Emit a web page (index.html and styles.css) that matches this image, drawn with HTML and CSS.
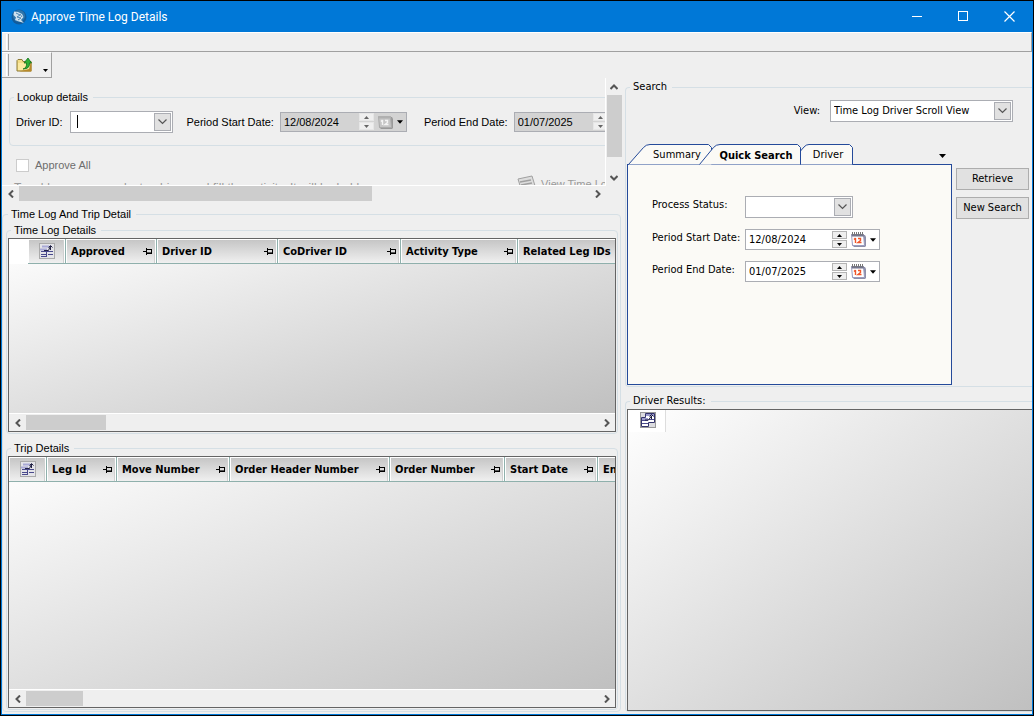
FILE: index.html
```html
<!DOCTYPE html>
<html lang="en">
<head>
	<meta charset="utf-8">
	<title>Approve Time Log Details</title>
	<link rel="stylesheet" href="styles.css">
</head>
<body>
	<!-- shared icons -->
	<svg class="defs" width="0" height="0" aria-hidden="true">
		<symbol id="pin" viewBox="0 0 10 9">
			<path d="M0 4.5H3M3.5 1V8M3 2.5H9M3 6.5H9M8.5 2V7" fill="none" stroke="#000"/>
			<path d="M4 5.5H9" stroke="#000" stroke-opacity=".6"/>
		</symbol>
		<symbol id="chooser" viewBox="0 0 16 16">
			<rect x=".5" y=".5" width="15" height="15" fill="#e4e4e8" stroke="#aaa"/>
			<path d="M3 3.5H10M1 6.5H8" stroke="#a9a9d6" stroke-width="2"/>
			<path d="M2 8.5H14M2 11.5H7M9 11.5H14M2 13.5H7M7.5 8V14" stroke="#4a4a8c"/>
			<path d="M5 7.5H9.5L11.5 3V7M9.5 4.5L11.5 2.5L13.5 4.5" fill="none" stroke="#222244"/>
		</symbol>
		<symbol id="chooser-big" viewBox="0 0 16 16">
			<rect x=".5" y=".5" width="15" height="15" fill="#dcdce0" stroke="#999"/>
			<path d="M5.5 1.5H14.5V10.5H8.5V14.5H1.5V5.5H5.5Z" fill="#fff" stroke="#34346c"/>
			<path d="M6 3H14M2 7H8" stroke="#9a9acc" stroke-width="2"/>
			<path d="M2 8.5H8M2 11.5H8M8.5 7.5H14" stroke="#4a4a8c"/>
			<path d="M5 8H8.5L11.5 4V7M9.500 4.500L11.500 2.500L13.500 4.500" fill="none" stroke="#181838"/>
		</symbol>
		<symbol id="calendar" viewBox="0 0 16 16">
			<path d="M3 3L14 3L15 5V14L14 15H3L1 13Z" fill="#8d8fa8"/>
			<path d="M.5 2.5H12.5L13.5 13.500H1.5Z" fill="#fff" stroke="#9a9cc0"/>
			<path d="M.5 2H12.500L13 4.500H1Z" fill="#74758c"/>
			<path d="M1.5 0V3M3.5 0V3M5.5 0V3M7.5 0V3M9.5 0V3M11.5 0V3" stroke="#777"/>
			<path d="M4.500 6V11M3 7.500L4.500 6M7 6.500H9.500V8.500L7 10.500H10.500" fill="none" stroke="#f0562a" stroke-width="1.400"/>
		</symbol>
		<symbol id="calendar-off" viewBox="0 0 16 16">
			<path d="M3 3L14 3L15 5V14L14 15H3L1 13Z" fill="#999"/>
			<path d="M.5 2.5H12.5L13.5 13.500H1.5Z" fill="#c6c6c6" stroke="#aaa"/>
			<path d="M.5 2H12.500L13 4.500H1Z" fill="#b0b0b0"/>
			<path d="M4.500 6V11M3 7.500L4.500 6M7 6.500H9.500V8.500L7 10.500H10.500" fill="none" stroke="#f4f4f4" stroke-width="1.400"/>
		</symbol>
		<symbol id="chevron" viewBox="0 0 9 6">
			<path d="M.5 .5L4.500 4.500L8.500 .5" fill="none" stroke="#555" stroke-width="1.200"/>
		</symbol>
		<symbol id="caret" viewBox="0 0 7 4">
			<path d="M0 0H7L3.500 4Z"/>
		</symbol>
		<symbol id="arrow" viewBox="0 0 6 8">
			<path d="M5 .5L1.500 4L5 7.500" fill="none" stroke="#555" stroke-width="2"/>
		</symbol>
	</svg>

	<div class="window">
		<header class="titlebar">
			<svg class="logo" width="16" height="16" viewBox="0 0 16 16">
				<circle cx="8" cy="8" r="7.500" fill="#125c9c"/>
				<circle cx="8" cy="7" r="6" fill="#2f76ac"/>
				<path d="M3 2.500L7 3L11 5L12.500 8L10 11L13 14L8 12.500L4 11L5 8.500L2.500 6Z" fill="#cfe2ef"/>
				<path d="M5 4L9 6L6 8L10 9L7 11M9 5L11 8" fill="none" stroke="#4b86b4"/>
			</svg>
			<h1>Approve Time Log Details</h1>
			<div class="window-buttons">
				<button aria-label="Minimize"><svg width="11" height="11"><path d="M0 5.500H10" stroke="#fff"/></svg></button>
				<button aria-label="Maximize"><svg width="11" height="11"><rect x=".5" y=".5" width="9" height="9" fill="none" stroke="#fff"/></svg></button>
				<button aria-label="Close"><svg width="11" height="11"><path d="M.5 .5L10.500 10.500M10.500 .5L.5 10.500" stroke="#fff" stroke-width="1.200"/></svg></button>
			</div>
		</header>

		<div class="menubar"><span class="grip"></span></div>
		<div class="toolbar">
			<span class="grip"></span>
			<button class="tool" aria-label="Close form">
				<svg width="17" height="16" viewBox="0 0 17 16">
					<path d="M1 3.500L2 2.500H6L7 4.500H15V14H1Z" fill="#f3dc86" stroke="#8d7a35"/>
					<path d="M2 6H14V13H2Z" fill="#fbe9a0"/>
					<path d="M15.500 4V14.500H3L13 12Z" fill="#b8892a"/>
					<path d="M7 12Q11 11 10.500 6H8L12 1L15.500 6H13.500Q14 12 7 12Z" fill="#2eb035" stroke="#11701a" stroke-width=".8"/>
				</svg>
			</button>
			<button class="tool more" aria-label="More"><svg width="5" height="3"><use href="#caret"/></svg></button>
		</div>

		<main>
			<section class="left">
				<div class="lookup">
					<div class="lookup-view">
						<fieldset class="group lookup-group">
							<legend>Lookup details</legend>
							<label for="driver-id">Driver ID:</label>
							<span class="combo driver-combo">
								<input id="driver-id" type="text">
								<i class="text-caret"></i>
								<button class="drop" aria-label="Open"><svg width="9" height="6"><use href="#chevron"/></svg></button>
							</span>
							<label for="log-start">Period Start Date:</label>
							<span class="datebox off">
								<input id="log-start" type="text" value="12/08/2024" disabled>
								<span class="spin">
									<button disabled aria-label="Up"><svg class="flip" width="5" height="3"><use href="#caret"/></svg></button>
									<button disabled aria-label="Down"><svg width="5" height="3"><use href="#caret"/></svg></button>
								</span>
								<svg width="16" height="16"><use href="#calendar-off"/></svg>
								<svg width="6" height="4"><use href="#caret"/></svg>
							</span>
							<label for="log-end">Period End Date:</label>
							<span class="datebox off">
								<input id="log-end" type="text" value="01/07/2025" disabled>
								<span class="spin">
									<button disabled aria-label="Up"><svg class="flip" width="5" height="3"><use href="#caret"/></svg></button>
									<button disabled aria-label="Down"><svg width="5" height="3"><use href="#caret"/></svg></button>
								</span>
								<svg width="16" height="16"><use href="#calendar-off"/></svg>
								<svg width="6" height="4"><use href="#caret"/></svg>
							</span>
						</fieldset>
						<label class="check"><input type="checkbox" disabled>Approve All</label>
						<div class="lookup-foot">
							<span class="hint">To add a new row select a driver and fill the activity. It will be held.</span>
							<button class="view-log" disabled>
								<svg width="20" height="18" viewBox="0 0 20 18">
									<path d="M1 4L15 1L19 14L5 17Z" fill="#ddd" stroke="#a0a0a0"/>
									<path d="M3 7L14 5M4 10L15 8" stroke="#a0a0a0" stroke-width="1.500"/>
								</svg>
								View Time Log
							</button>
						</div>
					</div>
					<div class="vscroll">
						<button aria-label="Scroll up"><svg class="up" width="6" height="8"><use href="#arrow"/></svg></button>
						<span class="thumb"></span>
						<button aria-label="Scroll down"><svg class="down" width="6" height="8"><use href="#arrow"/></svg></button>
					</div>
					<div class="hscroll">
						<button aria-label="Scroll left"><svg width="6" height="8"><use href="#arrow"/></svg></button>
						<span class="track"><span class="thumb" style="width: 62%"></span></span>
						<button aria-label="Scroll right"><svg class="flip" width="6" height="8"><use href="#arrow"/></svg></button>
					</div>
				</div>

				<fieldset class="group details">
					<legend>Time Log And Trip Detail</legend>
					<fieldset class="group log-group">
						<legend>Time Log Details</legend>
						<div class="grid">
							<div class="grid-body">
								<table class="log-table">
									<colgroup>
										<col class="w-blank"><col class="w-icon"><col class="w-approved"><col class="w-driver"><col class="w-codriver"><col class="w-activity"><col class="w-related">
									</colgroup>
									<tr>
										<td class="blank"></td>
										<th class="icon"><svg width="16" height="16"><use href="#chooser"/></svg></th>
										<th><div>Approved<svg width="10" height="9"><use href="#pin"/></svg></div></th>
										<th><div>Driver ID<svg width="10" height="9"><use href="#pin"/></svg></div></th>
										<th><div>CoDriver ID<svg width="10" height="9"><use href="#pin"/></svg></div></th>
										<th><div>Activity Type<svg width="10" height="9"><use href="#pin"/></svg></div></th>
										<th><div>Related Leg IDs<svg width="10" height="9"><use href="#pin"/></svg></div></th>
									</tr>
								</table>
							</div>
							<div class="hscroll">
								<button aria-label="Scroll left"><svg width="6" height="8"><use href="#arrow"/></svg></button>
								<span class="track"><span class="thumb" style="width: 14%"></span></span>
								<button aria-label="Scroll right"><svg class="flip" width="6" height="8"><use href="#arrow"/></svg></button>
							</div>
						</div>
					</fieldset>
					<fieldset class="group trip-group">
						<legend>Trip Details</legend>
						<div class="grid">
							<div class="grid-body">
								<table class="trip-table">
									<colgroup>
										<col class="w-icon"><col class="w-leg"><col class="w-move"><col class="w-header"><col class="w-order"><col class="w-start"><col class="w-end">
									</colgroup>
									<tr>
										<th class="icon"><svg width="16" height="16"><use href="#chooser"/></svg></th>
										<th><div>Leg Id<svg width="10" height="9"><use href="#pin"/></svg></div></th>
										<th><div>Move Number<svg width="10" height="9"><use href="#pin"/></svg></div></th>
										<th><div>Order Header Number<svg width="10" height="9"><use href="#pin"/></svg></div></th>
										<th><div>Order Number<svg width="10" height="9"><use href="#pin"/></svg></div></th>
										<th><div>Start Date<svg width="10" height="9"><use href="#pin"/></svg></div></th>
										<th><div>End Date<svg width="10" height="9"><use href="#pin"/></svg></div></th>
									</tr>
								</table>
							</div>
							<div class="hscroll">
								<button aria-label="Scroll left"><svg width="6" height="8"><use href="#arrow"/></svg></button>
								<span class="track"><span class="thumb" style="width: 10%"></span></span>
								<button aria-label="Scroll right"><svg class="flip" width="6" height="8"><use href="#arrow"/></svg></button>
							</div>
						</div>
					</fieldset>
				</fieldset>
			</section>

			<section class="right">
				<fieldset class="group search">
					<legend>Search</legend>
					<div class="view-row">
						<label for="view">View:</label>
						<span class="combo view-combo">
							<select id="view"><option>Time Log Driver Scroll View</option></select>
							<span class="drop"><svg width="9" height="6"><use href="#chevron"/></svg></span>
						</span>
					</div>
					<div class="search-body">
						<div class="tabs">
							<nav class="tab-strip">
								<button class="tab summary">
									<svg width="84" height="21"><path d="M.5 20.500L15.500 3.500Q18 .5 22 .5H80.500L83.500 3.500V20.500" fill="#fbfaf6" stroke="#244a9a"/></svg>
									<span>Summary</span>
								</button>
								<button class="tab quick">
									<svg width="102" height="21"><path d="M.5 20.500L14.500 3.500Q17 .5 21 .5H98.500L101.500 3.500V20.500" fill="#fbfaf6" stroke="#244a9a"/></svg>
									<span>Quick Search</span>
								</button>
								<button class="tab driver">
									<svg width="53" height="21"><path d="M.5 20.500V7L4 3Q6 .5 9 .5H49.500L52.500 3.500V20.500" fill="#fbfaf6" stroke="#244a9a"/></svg>
									<span>Driver</span>
								</button>
								<button class="tab-menu" aria-label="Tabs"><svg width="7" height="4"><use href="#caret"/></svg></button>
							</nav>
							<div class="tab-page">
								<label for="status">Process Status:</label>
								<span class="combo status-combo">
									<select id="status"><option></option></select>
									<span class="drop"><svg width="9" height="6"><use href="#chevron"/></svg></span>
								</span>
								<label for="start">Period Start Date:</label>
								<span class="datebox">
									<input id="start" type="text" value="12/08/2024">
									<span class="spin">
										<button aria-label="Up"><svg class="flip" width="5" height="3"><use href="#caret"/></svg></button>
										<button aria-label="Down"><svg width="5" height="3"><use href="#caret"/></svg></button>
									</span>
									<svg width="16" height="16"><use href="#calendar"/></svg>
									<svg width="6" height="4"><use href="#caret"/></svg>
								</span>
								<label for="end">Period End Date:</label>
								<span class="datebox">
									<input id="end" type="text" value="01/07/2025">
									<span class="spin">
										<button aria-label="Up"><svg class="flip" width="5" height="3"><use href="#caret"/></svg></button>
										<button aria-label="Down"><svg width="5" height="3"><use href="#caret"/></svg></button>
									</span>
									<svg width="16" height="16"><use href="#calendar"/></svg>
									<svg width="6" height="4"><use href="#caret"/></svg>
								</span>
							</div>
						</div>
						<div class="actions">
							<button>Retrieve</button>
							<button>New Search</button>
						</div>
					</div>
				</fieldset>
				<fieldset class="group results">
					<legend>Driver Results:</legend>
					<div class="grid">
						<div class="grid-body">
							<div class="result-corner"><svg width="16" height="16"><use href="#chooser-big"/></svg></div>
						</div>
					</div>
				</fieldset>
			</section>
		</main>
	</div>
</body>
</html>
```

FILE: styles.css
```css
* {
	box-sizing: border-box;
}
body {
	margin: 0;
	background: #000;
	color: #000;
	font: 11px/14px "Liberation Sans", Arial, sans-serif;
}
button, input, select {
	margin: 0;
	padding: 0;
	border: 0;
	border-radius: 0;
	background: none;
	color: inherit;
	font: inherit;
}
svg {
	display: block;
	flex: none;
}
.defs {
	position: absolute;
}
.flip {
	transform: rotate(180deg);
}
.up {
	transform: rotate(90deg);
}
.down {
	transform: rotate(-90deg);
}

/* window frame */
.window {
	display: flex;
	flex-direction: column;
	min-height: 100vh;
	border: 1px solid #000;
	overflow: hidden;
	background: #efefef;
	box-shadow: inset 0 0 0 1px #0078d7;
	padding: 0 1px 1px;
}
.titlebar {
	display: flex;
	align-items: center;
	height: 31px;
	padding-left: 9px;
	background: #0078d7;
	color: #fff;
}
.titlebar h1 {
	flex: 1;
	margin: 0 0 0 4px;
	font: 12px/16px Roboto, sans-serif;
}
.window-buttons {
	display: flex;
}
.window-buttons button {
	display: flex;
	align-items: center;
	justify-content: center;
	width: 46px;
	height: 30px;
}
.menubar, .toolbar {
	display: flex;
	align-items: center;
	padding-left: 4px;
	border-top: 1px solid #fff;
	border-right: 1px solid #a0a0a0;
	border-bottom: 1px solid #a0a0a0;
}
.menubar {
	height: 20px;
}
.toolbar {
	align-self: flex-start;
	width: 50px;
	height: 26px;
}
.grip {
	align-self: stretch;
	width: 3px;
	margin: 1px 0;
	border-right: 1px solid #a0a0a0;
	border-left: 1px solid #fff;
}
.tool {
	margin-left: 7px;
}
.tool.more {
	margin: 11px 0 0 10px;
}
main {
	flex: 1;
	display: grid;
	grid-template-columns: minmax(0, 1fr) 407px;
	column-gap: 3px;
}

/* group boxes */
.group {
	min-width: 0;
	margin: 0;
	padding: 0;
	border: 1px solid #d5dfe5;
	border-radius: 4px;
}
.group > legend {
	height: 14px;
	margin-left: 4px;
	padding: 0 5px 0 3px;
}
.left {
	display: flex;
	flex-direction: column;
	min-width: 0;
}

/* lookup panel */
.lookup {
	display: grid;
	grid-template: 108px 15px / minmax(0, 1fr) 16px;
}
.lookup-view {
	overflow: hidden;
	border-right: 1px solid #fff;
	border-bottom: 1px solid #fff;
	padding: 12px 0 0 7px;
}
.lookup-group {
	display: flex;
	align-items: center;
	width: 660px;
	height: 56px;
	padding-bottom: 6px;
}
.lookup-group > label {
	flex: none;
	margin: 0 6px;
}
.lookup-group > .combo {
	margin: 0 7px 0 2px;
}
.lookup-group > .datebox {
	margin-right: 11px;
}
.check {
	display: flex;
	align-items: center;
	gap: 6px;
	margin: 12px 0 0 7px;
	color: #6d6d6d;
}
.check input {
	appearance: none;
	width: 13px;
	height: 13px;
	border: 1px solid #ccc;
	background: #fff;
}
.lookup-foot {
	display: flex;
	justify-content: space-between;
	width: 640px;
	padding-left: 5px;
	color: #9a9a9a;
}
.hint {
	padding-top: 9px;
	font-size: 12px;
}
.view-log {
	display: flex;
	align-items: center;
	gap: 4px;
	margin-right: 36px;
	color: #9a9a9a;
}

/* combos and date boxes */
.combo {
	position: relative;
	display: flex;
	align-items: center;
	height: 22px;
	padding: 0 1px 0 3px;
	border: 1px solid #abadb3;
	background: #fff;
}
.combo input, .combo select {
	flex: 1;
	min-width: 0;
	height: 18px;
	appearance: none;
	outline: none;
}
.drop {
	display: flex;
	align-items: center;
	justify-content: center;
	width: 17px;
	height: 18px;
	border: 1px solid #abadb3;
	background: #e1e1e1;
	pointer-events: none;
}
.driver-combo {
	width: 103px;
}
.text-caret {
	position: absolute;
	left: 6px;
	width: 1px;
	height: 13px;
	background: #000;
}
.datebox {
	display: flex;
	align-items: center;
	flex: none;
	width: 135px;
	height: 21px;
	padding: 0 3px;
	border: 1px solid #abadb3;
	background: #fff;
}
.datebox input {
	flex: 1;
	min-width: 0;
}
.datebox > svg {
	margin-left: 4px;
}
.datebox > svg:last-child {
	margin-left: 3px;
}
.spin {
	display: flex;
	flex-direction: column;
	gap: 1px;
}
.spin button {
	display: flex;
	align-items: center;
	justify-content: center;
	width: 15px;
	height: 8px;
	border: 1px solid #b4b4b4;
	background: #efefef;
}
.datebox.off {
	width: 127px;
	height: 20px;
	background: #d3d3d3;
}
.off .spin button {
	border-color: #e6e6e6;
	color: #666;
	fill: #666;
}

/* scrollbars */
.hscroll, .vscroll {
	display: flex;
	align-items: center;
	background: #efefef;
}
.lookup .hscroll {
	height: 15px;
}
.vscroll {
	flex-direction: column;
}
.hscroll button, .vscroll button {
	display: flex;
	align-items: center;
	justify-content: center;
	width: 17px;
	height: 17px;
}
.track {
	flex: 1;
}
.thumb {
	display: block;
	height: 15px;
	background: #cdcdcd;
}
.vscroll .thumb {
	width: 15px;
	height: 62px;
	margin-bottom: auto;
}

/* grids */
.details {
	display: flex;
	flex-direction: column;
	gap: 7px;
	flex: 1;
	margin: 6px 1px 2px 0;
	padding: 2px 2px 1px 3px;
}
.details > legend {
	margin-left: 5px;
}
.group.details > legend {
	margin-left: 2px;
}
.log-group, .trip-group {
	display: flex;
	flex-direction: column;
	padding: 1px;
}
.group .group > legend {
	margin-left: 3px;
}
.log-group .grid-body {
	min-height: 174px;
}
.trip-group {
	flex: 1;
}
.grid {
	display: flex;
	flex-direction: column;
	flex: 1;
	height: 100%;
	border: 1px solid #646464;
}
.grid-body {
	flex: 1;
	overflow: hidden;
	background: linear-gradient(to bottom right, #fff, #c0c0c0);
}
.grid .hscroll {
	height: 18px;
	border-top: 1px solid #fff;
}
table {
	table-layout: fixed;
	width: 0;
	border-collapse: separate;
	border-spacing: 0;
}
th {
	height: 25px;
	padding: 1px 3px 0 5px;
	border: solid #8fb0ac;
	border-width: 0 1px 1px 0;
	background: linear-gradient(#c4c4c4, #f0f0f0);
	box-shadow: inset 1px 1px #fff, inset -1px 0 #fff, inset -2px 0 #d0d0d0;
	font: bold 11px/14px "DejaVu Sans Condensed", Tahoma, sans-serif;
	text-align: left;
	white-space: nowrap;
}
th div {
	display: flex;
	align-items: center;
	justify-content: space-between;
}
th.icon {
	padding: 0 0 0 11px;
}
.blank {
	padding: 0;
	background: #fff;
}
.w-blank { width: 19px; }
.w-icon { width: 38px; }
.w-approved { width: 91px; }
.w-driver { width: 121px; }
.w-codriver { width: 123px; }
.w-activity { width: 117px; }
.w-related { width: 130px; }
.w-leg { width: 70px; }
.w-move { width: 113px; }
.w-header { width: 160px; }
.w-order { width: 115px; }
.w-start { width: 93px; }
.w-end { width: 100px; }

/* search side */
.right {
	display: flex;
	flex-direction: column;
	min-width: 0;
	font: 11px/14px "DejaVu Sans Condensed", Tahoma, sans-serif;
}
.right .group {
	border-right: 0;
	border-radius: 4px 0 0 4px;
}
.right .group > legend {
	margin-left: 3px;
}
.search {
	margin-top: 2px;
	padding: 6px 0 1px 1px;
}
.view-row {
	display: flex;
	align-items: center;
	justify-content: flex-end;
	gap: 10px;
	margin-right: 19px;
}
.view-combo {
	width: 183px;
}
.search-body {
	display: flex;
	gap: 4px;
	margin-top: 22px;
	padding-right: 3px;
}
.tabs {
	flex: 1;
}
.tab-strip {
	display: flex;
	position: relative;
	z-index: 1;
	height: 21px;
	margin-bottom: -1px;
	padding-left: 1px;
}
.tab {
	position: relative;
	height: 21px;
	padding-top: 2px;
}
.tab svg {
	position: absolute;
	top: 0;
	left: 0;
}
.tab span {
	position: relative;
}
.summary {
	width: 83px;
	padding-left: 15px;
	border-bottom: 1px solid #244a9a;
}
.quick {
	z-index: 1;
	width: 102px;
	margin-left: -12px;
	padding-left: 12px;
	font-weight: bold;
}
.driver {
	width: 53px;
	margin-left: -1px;
	padding-left: 3px;
	border-bottom: 1px solid #244a9a;
}
.tab-menu {
	margin-left: auto;
	padding: 3px 6px 0;
}
.tab-page {
	display: grid;
	grid-template-columns: 93px max-content;
	align-content: start;
	row-gap: 11px;
	height: 221px;
	padding: 31px 24px 0;
	border: 1px solid #244a9a;
	background: #fbfaf6;
}
.tab-page label {
	padding-top: 2px;
	white-space: nowrap;
}
.status-combo {
	width: 108px;
}
.actions {
	display: flex;
	flex-direction: column;
	gap: 7px;
	width: 73px;
	padding-top: 24px;
}
.actions button {
	height: 22px;
	border: 1px solid #adadad;
	background: #e1e1e1;
}
.results {
	flex: 1;
	display: flex;
	flex-direction: column;
	margin: 7px 0 2px;
	padding: 1px 0 0 1px;
}
.results .grid {
	border-right: 0;
}
.result-corner {
	width: 38px;
	height: 22px;
	padding: 2px 0 0 12px;
	border-right: 1px solid #ddd;
	background: #fff;
}
```
